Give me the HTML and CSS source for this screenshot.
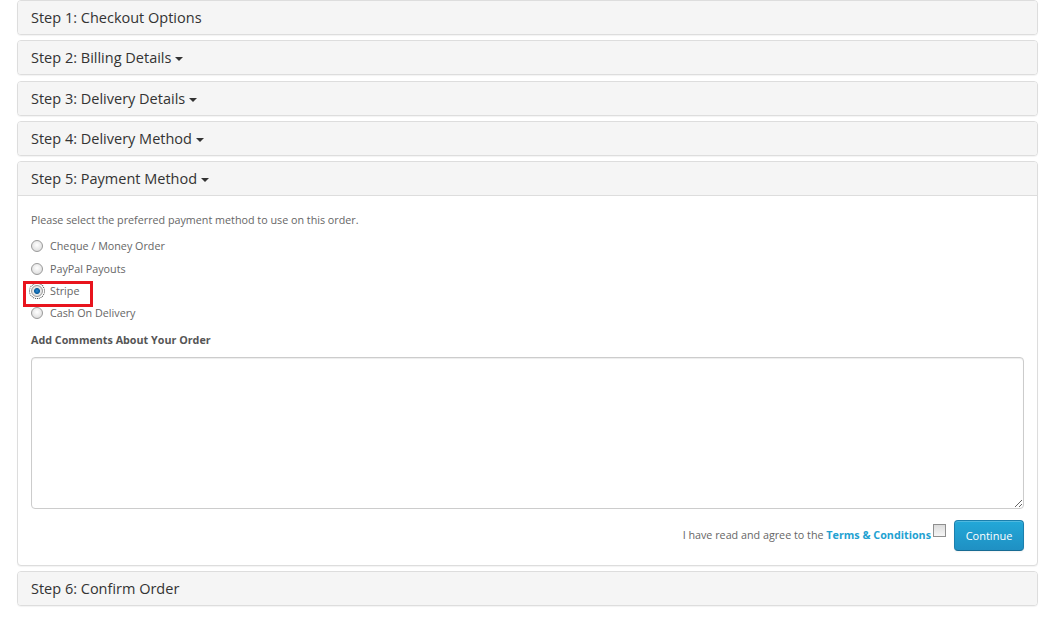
FILE: index.html
```html
<!DOCTYPE html>
<html lang="en">
<head>
    <meta charset="UTF-8">
    <title>Checkout</title>
    <link rel="stylesheet" href="styles.css">
</head>
<body>
    <div class="checkout">
        <div class="panel">
            <div class="panel-heading">Step 1: Checkout Options</div>
        </div>
        <div class="panel">
            <div class="panel-heading">Step 2: Billing Details <span class="caret"></span></div>
        </div>
        <div class="panel">
            <div class="panel-heading">Step 3: Delivery Details <span class="caret"></span></div>
        </div>
        <div class="panel">
            <div class="panel-heading">Step 4: Delivery Method <span class="caret"></span></div>
        </div>
        <div class="panel">
            <div class="panel-heading">Step 5: Payment Method <span class="caret"></span></div>
            <div class="panel-body">
                <p class="intro">Please select the preferred payment method to use on this order.</p>
                <div class="radio-list">
                    <label class="radio"><span class="radio-dot"></span>Cheque / Money Order</label>
                    <label class="radio"><span class="radio-dot"></span>PayPal Payouts</label>
                    <label class="radio selected"><span class="radio-dot"></span>Stripe<span class="highlight"></span></label>
                    <label class="radio"><span class="radio-dot"></span>Cash On Delivery</label>
                </div>
                <p class="comments-label">Add Comments About Your Order</p>
                <textarea class="comments"></textarea>
                <div class="agree-row">
                    <span>I have read and agree to the <a href="#" class="terms">Terms &amp; Conditions</a></span>
                    <span class="checkbox"></span>
                    <button class="continue-button">Continue</button>
                </div>
            </div>
        </div>
        <div class="panel">
            <div class="panel-heading">Step 6: Confirm Order</div>
        </div>
    </div>
</body>
</html>
```

FILE: styles.css
```css
body {
    margin: 0;
    font-family: "Open Sans", sans-serif;
    font-size: 10.75px;
    color: #666;
    background: #fff;
}
.checkout {
    width: 1021px;
    margin-left: 17px;
}
.panel {
    border: 1px solid #ddd;
    border-radius: 4px;
    margin-bottom: 5.33px;
    background: #fff;
    box-shadow: 0 1px 1px rgba(0,0,0,0.05);
}
.panel-heading {
    background: #f5f5f5;
    color: #333;
    font-size: 14.5px;
    height: 33px;
    line-height: 33px;
    padding: 0 13px;
    border-radius: 3px;
}
.panel:has(.panel-body) .panel-heading {
    border-bottom: 1px solid #ddd;
    border-radius: 3px 3px 0 0;
}
.caret {
    display: inline-block;
    width: 0;
    height: 0;
    vertical-align: middle;
    border-top: 4px solid #333;
    border-left: 4px solid transparent;
    border-right: 4px solid transparent;
}
.panel-body {
    padding: 15px 13px 14px;
}
.intro {
    margin: 0;
    line-height: 18px;
}
.radio-list {
    margin-top: 6px;
}
.radio {
    position: relative;
    display: flex;
    align-items: center;
    height: 22.33px;
    color: #666;
}
.radio-dot {
    width: 10px;
    height: 10px;
    border: 1px solid #9a9a9a;
    border-radius: 50%;
    margin-right: 7px;
    background: radial-gradient(circle at 50% 40%, #fff 0, #e6e6e6 60%, #cfcfcf 100%);
}
.selected .radio-dot {
    background: radial-gradient(circle, #2a8ad4 0, #0b5d9c 2.5px, #e8e8e8 3.5px, #d4d4d4 100%);
    outline: 1px dotted #333;
    outline-offset: 1px;
}
.highlight {
    position: absolute;
    left: -8px;
    top: 1px;
    width: 64px;
    height: 20px;
    border: 3px solid #e8141d;
}
.comments-label {
    margin: 8px 0 10px;
    font-weight: bold;
    color: #555;
}
.comments {
    display: block;
    box-sizing: border-box;
    width: 100%;
    height: 152px;
    border: 1px solid #ccc;
    border-radius: 4px;
    box-shadow: inset 0 1px 1px rgba(0,0,0,0.075);
    margin: 0;
}
.agree-row {
    display: flex;
    justify-content: flex-end;
    align-items: center;
    margin-top: 11px;
    color: #666;
}
.terms {
    color: #23a1d1;
    font-weight: bold;
    text-decoration: none;
}
.checkbox {
    width: 11px;
    height: 11px;
    border: 1px solid #8f8f8f;
    background: linear-gradient(#dcdcdc, #f6f6f6);
    margin: 4px 8px 0 2px;
    align-self: flex-start;
}
.continue-button {
    font-family: "Open Sans", sans-serif;
    font-size: 11px;
    color: #fff;
    background: linear-gradient(#23a8d8, #1f90c3);
    border: 1px solid #1b7fad;
    border-bottom-color: #176b93;
    border-radius: 4px;
    width: 70px;
    height: 31px;
    padding: 0;
    box-shadow: inset 0 1px 0 rgba(255,255,255,0.2), 0 1px 2px rgba(0,0,0,0.05);
}
```
